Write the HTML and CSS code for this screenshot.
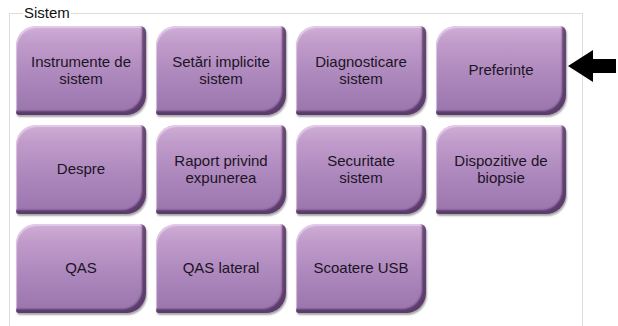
FILE: index.html
```html
<!DOCTYPE html>
<html lang="ro">
<head>
<meta charset="utf-8">
<title>Sistem</title>
<link rel="stylesheet" href="styles.css">
</head>
<body>
<div class="page">
  <fieldset class="frame">
    <legend class="frame-title">Sistem</legend>
    <div class="grid">
      <div class="btn">Instrumente de<br>sistem</div>
      <div class="btn">Setări implicite<br>sistem</div>
      <div class="btn">Diagnosticare<br>sistem</div>
      <div class="btn">Preferințe</div>
      <div class="btn">Despre</div>
      <div class="btn">Raport privind<br>expunerea</div>
      <div class="btn">Securitate<br>sistem</div>
      <div class="btn">Dispozitive de<br>biopsie</div>
      <div class="btn">QAS</div>
      <div class="btn">QAS lateral</div>
      <div class="btn">Scoatere USB</div>
    </div>
  </fieldset>
  <svg class="arrow" width="50" height="34" viewBox="0 0 50 34" aria-hidden="true">
    <path d="M1 17 L26 1 L26 10 L49 10 L49 24 L26 24 L26 33 Z" fill="#000"/>
  </svg>
</div>
</body>
</html>
```
FILE: styles.css
```css
html, body {
  margin: 0;
  padding: 0;
  background: #fff;
}
.page {
  position: relative;
  width: 618px;
  height: 326px;
  overflow: hidden;
  font-family: "Liberation Sans", Arial, sans-serif;
}
.frame {
  margin: 5px 0 0 9px;
  width: 574px;
  box-sizing: border-box;
  border: 1px solid #dcdcdc;
  padding: 5px 0 20px 6px;
  min-height: 340px;
}
.frame-title {
  font-size: 15px;
  line-height: 16px;
  color: #111;
  padding: 0 1px;
  margin-left: 7px;
}
.grid {
  display: grid;
  grid-template-columns: repeat(4, 130px);
  grid-auto-rows: 89px;
  column-gap: 10px;
  row-gap: 10px;
}
.btn {
  display: flex;
  align-items: center;
  justify-content: center;
  text-align: center;
  font-size: 15px;
  line-height: 17px;
  color: #1c1424;
  border-radius: 20px 6px 20px 3px;
  background: linear-gradient(to bottom, #cfaed6 0%, #c09bca 20%, #ad88bd 55%, #9a75ad 100%);
  box-shadow:
    inset -4px -4px 2px rgba(70, 40, 85, 0.75),
    inset 1px 2px 1px rgba(235, 215, 240, 0.7),
    1px 2px 2px rgba(0, 0, 0, 0.35);
  padding-bottom: 2px;
  box-sizing: border-box;
}
.arrow {
  position: absolute;
  left: 567px;
  top: 49px;
}
```
